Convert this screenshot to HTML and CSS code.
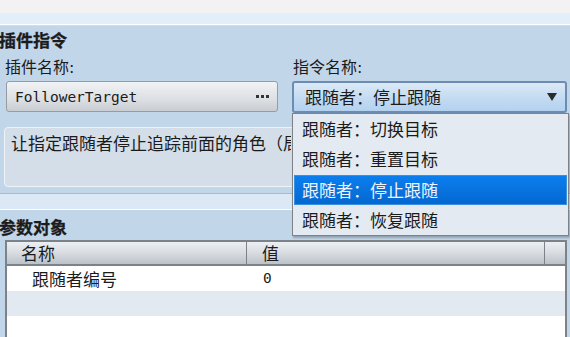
FILE: index.html
```html
<!DOCTYPE html>
<html>
<head>
    <meta charset="utf-8">
    <title>插件指令</title>
    <link rel="stylesheet" href="styles.css">
</head>
<body>
<div class="topbar"></div>
<div class="band"></div>
<div class="panel">
    <h2 class="title">插件指令</h2>
    <div class="fields">
        <div class="field">
            <label>插件名称:</label>
            <div class="btn">
                <span class="mono">FollowerTarget</span>
                <svg class="dots" width="14" height="4" viewBox="0 0 14 4">
                    <rect x="0" y="0" width="3" height="3" fill="#333"/>
                    <rect x="5" y="0" width="3" height="3" fill="#333"/>
                    <rect x="10" y="0" width="3" height="3" fill="#333"/>
                </svg>
            </div>
        </div>
        <div class="field">
            <label>指令名称:</label>
            <div class="select">
                <span>跟随者：停止跟随</span>
                <svg class="arrow" width="10" height="8" viewBox="0 0 10 8">
                    <polygon points="0,0 10,0 5,8" fill="#2b2b2b"/>
                </svg>
            </div>
        </div>
    </div>
    <div class="desc"><span class="desc-text">让指定跟随者停止追踪前面的角色（局部）</span></div>
</div>
<div class="band2"></div>
<div class="panel2">
    <h2 class="title">参数对象</h2>
    <div class="table">
        <div class="thead">
            <div class="c1">名称</div>
            <div class="c2">值</div>
            <div class="c3"></div>
        </div>
        <div class="tr">
            <div class="c1 indent">跟随者编号</div>
            <div class="c2 mono">0</div>
        </div>
        <div class="tr alt"></div>
        <div class="tr"></div>
    </div>
</div>
<ul class="dropdown">
    <li>跟随者：切换目标</li>
    <li>跟随者：重置目标</li>
    <li class="active">跟随者：停止跟随</li>
    <li>跟随者：恢复跟随</li>
</ul>
</body>
</html>
```

FILE: styles.css
```css
* {
    margin: 0;
    padding: 0;
    box-sizing: border-box;
}

body {
    width: 570px;
    height: 337px;
    overflow: hidden;
    position: relative;
    background: #c2d6ea;
    font-family: "Noto Sans CJK SC", "DejaVu Sans", sans-serif;
    font-size: 17px;
    color: #1b1b1b;
}

.mono {
    font-family: "DejaVu Sans Mono", "Liberation Mono", monospace;
    font-size: 14.5px;
}

.topbar {
    height: 13px;
    background: #f2f2f2;
}

.band {
    height: 12px;
    background: #e3eefb;
    border-bottom: 1px solid #fff;
    box-shadow: 0 1px 0 #d3dde8;
}

.panel {
    padding: 3px 4px 6px 0;
    border-bottom: 1px solid #a9bacb;
}

.title {
    font-size: 17px;
    font-weight: bold;
    line-height: 24px;
    height: 24px;
    margin-left: -1px;
    -webkit-text-stroke: 0.3px #1b1b1b;
}

.fields {
    display: grid;
    grid-template-columns: 274px 275px;
    gap: 14px;
    margin-top: 5px;
    padding-left: 4px;
}

.field label {
    display: block;
    font-family: "DejaVu Sans", "Noto Sans CJK SC", sans-serif;
    font-size: 16px;
    line-height: 22px;
    height: 22px;
    padding-left: 1px;
    margin-bottom: 2px;
}

.btn {
    height: 31px;
    margin-left: 2px;
    border: 1px solid #979ca3;
    border-radius: 3px;
    background: linear-gradient(#f1f3f5, #dcdfe3 60%, #c9cdd2);
    display: flex;
    align-items: center;
    justify-content: space-between;
    padding: 0 7px 0 8px;
}

.select {
    height: 32px;
    border: 2px solid #6c8cb2;
    border-radius: 3px;
    background: linear-gradient(#dce9f6, #c3dbf2 55%, #b3d1ef);
    display: flex;
    align-items: center;
    justify-content: space-between;
    padding: 0 8px 0 11px;
    line-height: 22px;
}

.desc {
    margin: 14px 0 0 4px;
    height: 60px;
    border: 1px solid #eef3f8;
    border-radius: 4px;
    background: #d3dee9;
    padding: 4px 6px;
    line-height: 22px;
}

.desc-text {
    display: block;
    width: 280px;
    white-space: nowrap;
    overflow: hidden;
}

.band2 {
    height: 16px;
    background: #dce8f5;
    border-bottom: 1px solid #fff;
}

.panel2 {
    padding: 5px 3px 0 0;
}

.table {
    margin: 1px 0 0 5px;
    border: 2px solid #7c828a;
    border-bottom: none;
    background: #fff;
    height: 100px;
}

.thead {
    display: flex;
    height: 24px;
    line-height: 22px;
    background: linear-gradient(#eceff2, #d8dce1 50%, #bcc2c9);
    border-bottom: 2px solid #7c828a;
}

.thead .c1 {
    width: 240px;
    padding-left: 14px;
    border-right: 1px solid #7c828a;
}

.thead .c2 {
    width: 298px;
    padding-left: 15px;
    border-right: 1px solid #7c828a;
}

.tr {
    display: flex;
    height: 25px;
    line-height: 25px;
}

.tr .c1 {
    width: 241px;
}

.tr .indent {
    padding-left: 25px;
}

.tr .c2 {
    padding-left: 15px;
}

.tr.alt {
    background: #e3e9f0;
}

.dropdown {
    position: absolute;
    left: 292px;
    top: 113px;
    width: 277px;
    height: 123px;
    list-style: none;
    background: #e3eaf2;
    border: 1px solid #7f8286;
    box-shadow: 1px 2px 2px rgba(0, 0, 0, 0.25);
    padding: 0 1px 1px;
}

.dropdown li {
    height: 30px;
    line-height: 29px;
    padding-left: 8px;
}

.dropdown .active {
    margin-top: 1px;
    background: linear-gradient(#0b7eee, #0468d0);
    color: #eef5ff;
    border: 1px solid #3a8fe0;
    line-height: 27px;
    padding-left: 7px;
}

.dropdown .active + li {
    height: 29px;
}
```
